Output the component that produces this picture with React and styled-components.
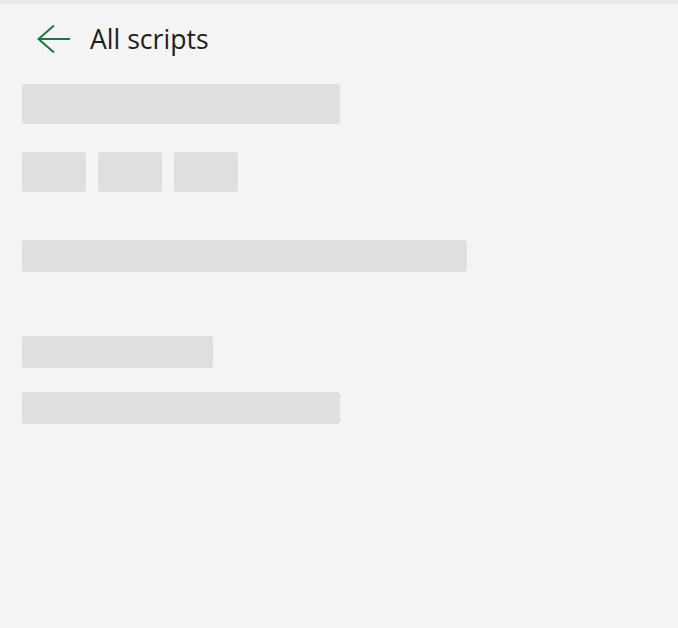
import React from "react";
import styled, { createGlobalStyle } from "styled-components";

const Global = createGlobalStyle`
  html, body { margin: 0; padding: 0; background: #f4f4f4; }
  body { font-family: "Segoe UI", "Open Sans", "Noto Sans", sans-serif; }
`;

const Page = styled.div`
  min-height: 628px;
  background: #f4f4f4;
  border-top: 4px solid #e9e9e9;
  box-sizing: border-box;
  padding: 0 22px;
`;

const Header = styled.div`
  height: 72px;
  display: flex;
  align-items: center;
  padding-left: 15px;
  gap: 19px;
`;

const BackButton = styled.button`
  border: none;
  background: none;
  padding: 0;
  width: 34px;
  height: 30px;
  display: flex;
  cursor: pointer;
`;

const Title = styled.h1`
  margin: 0 0 2px;
  font-size: 26.6px;
  line-height: 36px;
  font-weight: 400;
  color: #201f1e;
  letter-spacing: 0;
`;

const Skeleton = styled.div`
  width: ${(p) => p.$w}px;
  height: ${(p) => p.$h}px;
  background: #e1dfdd;
  border-radius: 3px;
  margin-top: ${(p) => p.$mt || 0}px;
`;

const ChipRow = styled.div`
  display: flex;
  gap: 12px;
  margin-top: 28px;
`;

export default function App() {
  return (
    <>
      <Global />
      <Page>
        <Header>
          <BackButton aria-label="Back">
            <svg width="34" height="30" viewBox="0 0 34 30" fill="none">
              <path
                d="M33 14H1.5M17 0.5L1.5 14L17 27.5"
                stroke="#217346"
                strokeWidth="2"
                strokeLinejoin="miter"
              />
            </svg>
          </BackButton>
          <Title>All scripts</Title>
        </Header>
        <Skeleton $w={318} $h={40} $mt={8} />
        <ChipRow>
          <Skeleton $w={64} $h={40} />
          <Skeleton $w={64} $h={40} />
          <Skeleton $w={64} $h={40} />
        </ChipRow>
        <Skeleton $w={445} $h={32} $mt={48} />
        <Skeleton $w={191} $h={32} $mt={64} />
        <Skeleton $w={318} $h={32} $mt={24} />
      </Page>
    </>
  );
}
